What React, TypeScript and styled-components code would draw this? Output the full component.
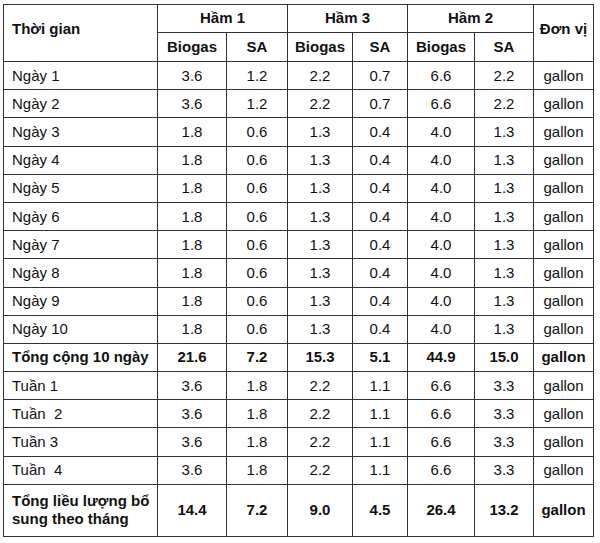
import styled, { createGlobalStyle } from 'styled-components'

const GlobalStyle = createGlobalStyle`
  html, body { margin: 0; padding: 0; background: #fff; }
  body { font-family: "Liberation Sans", Arial, sans-serif; color: #111; }
`

type Row = { label: string; values: string[]; unit: string; bold?: boolean; tall?: boolean }

const days = [
  ['3.6', '1.2', '2.2', '0.7', '6.6', '2.2'],
  ['3.6', '1.2', '2.2', '0.7', '6.6', '2.2'],
  ...Array.from({ length: 8 }, () => ['1.8', '0.6', '1.3', '0.4', '4.0', '1.3']),
]

const weeks = ['Tuần 1', 'Tuần  2', 'Tuần 3', 'Tuần  4']

const rows: Row[] = [
  ...days.map((v, i) => ({ label: `Ngày ${i + 1}`, values: v, unit: 'gallon' })),
  { label: 'Tổng cộng 10 ngày', values: ['21.6', '7.2', '15.3', '5.1', '44.9', '15.0'], unit: 'gallon', bold: true },
  ...weeks.map(w => ({ label: w, values: ['3.6', '1.8', '2.2', '1.1', '6.6', '3.3'], unit: 'gallon' })),
  { label: 'Tổng liều lượng bổ sung theo tháng', values: ['14.4', '7.2', '9.0', '4.5', '26.4', '13.2'], unit: 'gallon', bold: true, tall: true },
]

const colWidths = [154, 69, 61, 65, 55, 67, 59, 60]

export default function App() {
  return (
    <>
      <GlobalStyle />
      <Page>
        <Table>
          <colgroup>
            {colWidths.map((w, i) => <col key={i} style={{ width: w }} />)}
          </colgroup>
          <thead>
            <HeadRow>
              <SpanHead rowSpan={2} $left>Thời gian</SpanHead>
              <GroupHead colSpan={2}>Hầm 1</GroupHead>
              <GroupHead colSpan={2}>Hầm 3</GroupHead>
              <GroupHead colSpan={2}>Hầm 2</GroupHead>
              <SpanHead rowSpan={2}>Đơn vị</SpanHead>
            </HeadRow>
            <HeadRow $second>
              <SubHead>Biogas</SubHead>
              <SubHead>SA</SubHead>
              <SubHead>Biogas</SubHead>
              <SubHead>SA</SubHead>
              <SubHead>Biogas</SubHead>
              <SubHead>SA</SubHead>
            </HeadRow>
          </thead>
          <tbody>
            {rows.map((r, i) => (
              <BodyRow key={i} $tall={r.tall}>
                <LabelCell $bold={r.bold}>{r.label}</LabelCell>
                {r.values.map((v, j) => (
                  <NumCell key={j} $bold={r.bold}>{v}</NumCell>
                ))}
                <NumCell $bold={r.bold}>{r.unit}</NumCell>
              </BodyRow>
            ))}
          </tbody>
        </Table>
      </Page>
    </>
  )
}

const Page = styled.div`
  padding: 4px 0 0 3px;
`

const Table = styled.table`
  border-collapse: collapse;
  table-layout: fixed;
  width: 590px;
  font-size: 15px;
  line-height: 1.2;
  td, th { border: 1px solid #333; padding: 0; }
`

const HeadRow = styled.tr<{ $second?: boolean }>`
  height: ${p => (p.$second ? 29 : 28)}px;
`

const SpanHead = styled.th<{ $left?: boolean }>`
  text-align: ${p => (p.$left ? 'left' : 'center')};
  padding: 0 0 8px ${p => (p.$left ? 8 : 0)}px !important;
  font-weight: 700;
  vertical-align: middle;
`

const GroupHead = styled.th`
  text-align: center;
  font-weight: 700;
  vertical-align: middle;
  padding-bottom: 2px !important;
`

const SubHead = styled.th`
  text-align: center;
  font-weight: 700;
`

const BodyRow = styled.tr<{ $tall?: boolean }>`
  height: ${p => (p.$tall ? 52 : 28.2)}px;
`

const LabelCell = styled.td<{ $bold?: boolean }>`
  text-align: left;
  white-space: pre-wrap;
  padding: 0 6px 0 8px !important;
  font-weight: ${p => (p.$bold ? 700 : 400)};
`

const NumCell = styled.td<{ $bold?: boolean }>`
  text-align: center;
  font-weight: ${p => (p.$bold ? 700 : 400)};
`
